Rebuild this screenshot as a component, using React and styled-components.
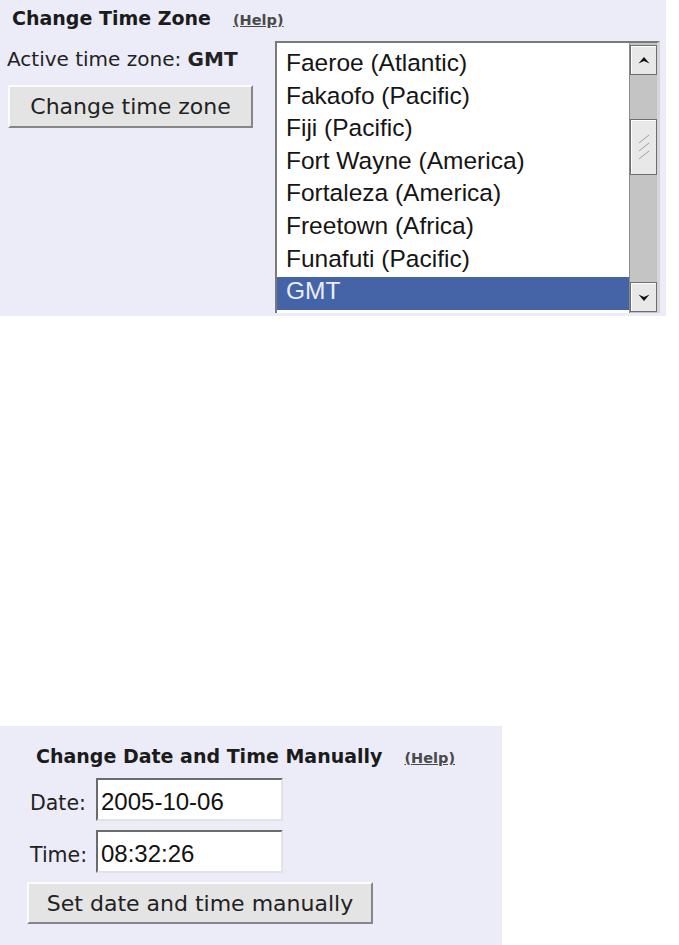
import React from "react";
import styled, { createGlobalStyle } from "styled-components";

const GlobalStyle = createGlobalStyle`
  html, body {
    margin: 0;
    padding: 0;
    background: #ffffff;
  }
  body {
    font-family: "DejaVu Sans", sans-serif;
    color: #222;
  }
`;

// Panels
const TimeZonePanel = styled.section`
  width: 666px;
  height: 316px;
  box-sizing: border-box;
  padding: 7px 0 0 7px;
  background: #ebecf8;
  overflow: hidden;
`;

const DatePanel = styled.section`
  width: 502px;
  height: 219px;
  margin-top: 410px;
  box-sizing: border-box;
  padding: 19px 0 0 27px;
  background: #ebecf8;
`;

const SectionTitle = styled.div`
  display: flex;
  align-items: baseline;
  gap: 22px;
  padding-left: ${(p) => p.$indent}px;
  font: bold 19px/22px "DejaVu Sans", sans-serif;
  color: #1b1b1b;
`;

const HelpLink = styled.a`
  font: bold 14.5px "DejaVu Sans", sans-serif;
  color: #4a4a4a;
  text-decoration: underline;
`;

const Body = styled.div`
  display: flex;
  margin-top: 12px;
`;

const LeftColumn = styled.div`
  width: 268px;
  padding-top: 6px;
  display: flex;
  flex-direction: column;
  align-items: flex-start;
`;

const ActiveLabel = styled.div`
  font: 20px/24px "DejaVu Sans", sans-serif;
  color: #222;
  margin-bottom: 14px;

  b {
    font-weight: bold;
  }
`;

const Button = styled.button`
  width: ${(p) => p.$width}px;
  height: ${(p) => p.$height}px;
  margin-left: ${(p) => p.$offset || 0}px;
  padding: 0;
  box-sizing: border-box;
  background: #e4e4e4;
  border: 2px solid;
  border-color: #fbfbfb #868686 #868686 #fbfbfb;
  font: 22px "DejaVu Sans", sans-serif;
  color: #222;
`;

// Time zone list box
const ListBox = styled.div`
  width: 385px;
  height: 272px;
  box-sizing: border-box;
  display: flex;
  background: #ffffff;
  border-top: 2px solid #7a7a7a;
  border-left: 2px solid #7a7a7a;
  border-right: 3px solid #d6d6d6;
`;

const Options = styled.div`
  flex: 1;
  padding-top: 6px;
  overflow: hidden;
`;

const Option = styled.div`
  height: 32.6px;
  line-height: 32.6px;
  padding-left: 9px;
  font: 24.5px "Liberation Sans", Arial, sans-serif;
  white-space: nowrap;
  color: ${(p) => (p.$selected ? "#e9edf6" : "#151515")};
  background: ${(p) => (p.$selected ? "#4564a8" : "transparent")};
`;

const ScrollBar = styled.div`
  width: 28px;
  box-sizing: border-box;
  padding: 2px 0 1px;
  display: flex;
  flex-direction: column;
  background: #c4c4c4;
  border-left: 1px solid #8a8a8a;
`;

const ScrollButton = styled.div`
  height: 30px;
  box-sizing: border-box;
  display: flex;
  align-items: center;
  justify-content: center;
  background: #e8e8e8;
  border: 1px solid #6e6e6e;
  box-shadow: inset 1px 1px 0 #ffffff;
  margin-top: ${(p) => (p.$bottom ? "auto" : "0")};
`;

const Thumb = styled.div`
  height: 56px;
  margin-top: 44px;
  box-sizing: border-box;
  display: flex;
  align-items: center;
  justify-content: center;
  background: #e8e8e8;
  border: 1px solid #6e6e6e;
  box-shadow: inset 1px 1px 0 #ffffff;
`;

// Date form
const Form = styled.div`
  display: flex;
  flex-direction: column;
  gap: 9px;
  margin-top: 11px;
`;

const FieldRow = styled.div`
  display: flex;
  align-items: baseline;
`;

const FieldLabel = styled.label`
  width: 69px;
  box-sizing: border-box;
  padding-left: 3px;
  font: 20.5px "DejaVu Sans", sans-serif;
  color: #222;
`;

const TextInput = styled.input`
  width: 187px;
  height: 43px;
  box-sizing: border-box;
  padding: 4px 0 0 3px;
  margin: 0;
  border: 2px solid;
  border-color: #6b6b6b #e2e2e2 #e2e2e2 #6b6b6b;
  background: #ffffff;
  font: 24px "Liberation Sans", Arial, sans-serif;
  color: #111;
  outline: none;
`;

const ArrowIcon = ({ down }) => (
  <svg width="12" height="9" viewBox="0 0 12 9">
    <polygon
      points={down ? "0.5,1.5 6,8 11.5,1.5 6,4" : "0.5,7.5 6,1 11.5,7.5 6,5"}
      fill="#111"
    />
  </svg>
);

const GripIcon = () => (
  <svg width="12" height="26" viewBox="0 0 12 26">
    <g stroke="#a0a0a0" strokeWidth="1">
      <line x1="1" y1="9" x2="11" y2="1" />
      <line x1="1" y1="17" x2="11" y2="9" />
      <line x1="1" y1="25" x2="11" y2="17" />
    </g>
  </svg>
);

const zones = [
  "Faeroe (Atlantic)",
  "Fakaofo (Pacific)",
  "Fiji (Pacific)",
  "Fort Wayne (America)",
  "Fortaleza (America)",
  "Freetown (Africa)",
  "Funafuti (Pacific)",
  "GMT",
];

export default function App() {
  return (
    <>
      <GlobalStyle />
      <TimeZonePanel>
        <SectionTitle $indent={5}>
          Change Time Zone <HelpLink href="#">(Help)</HelpLink>
        </SectionTitle>
        <Body>
          <LeftColumn>
            <ActiveLabel>
              Active time zone: <b>GMT</b>
            </ActiveLabel>
            <Button $width={245} $height={43} $offset={1}>
              Change time zone
            </Button>
          </LeftColumn>
          <ListBox>
            <Options>
              {zones.map((z) => (
                <Option key={z} $selected={z === "GMT"}>
                  {z}
                </Option>
              ))}
            </Options>
            <ScrollBar>
              <ScrollButton>
                <ArrowIcon />
              </ScrollButton>
              <Thumb>
                <GripIcon />
              </Thumb>
              <ScrollButton $bottom>
                <ArrowIcon down />
              </ScrollButton>
            </ScrollBar>
          </ListBox>
        </Body>
      </TimeZonePanel>

      <DatePanel>
        <SectionTitle $indent={9}>
          Change Date and Time Manually <HelpLink href="#">(Help)</HelpLink>
        </SectionTitle>
        <Form>
          <FieldRow>
            <FieldLabel>Date:</FieldLabel>
            <TextInput defaultValue="2005-10-06" />
          </FieldRow>
          <FieldRow>
            <FieldLabel>Time:</FieldLabel>
            <TextInput defaultValue="08:32:26" />
          </FieldRow>
          <div>
            <Button $width={346} $height={42}>
              Set date and time manually
            </Button>
          </div>
        </Form>
      </DatePanel>
    </>
  );
}
